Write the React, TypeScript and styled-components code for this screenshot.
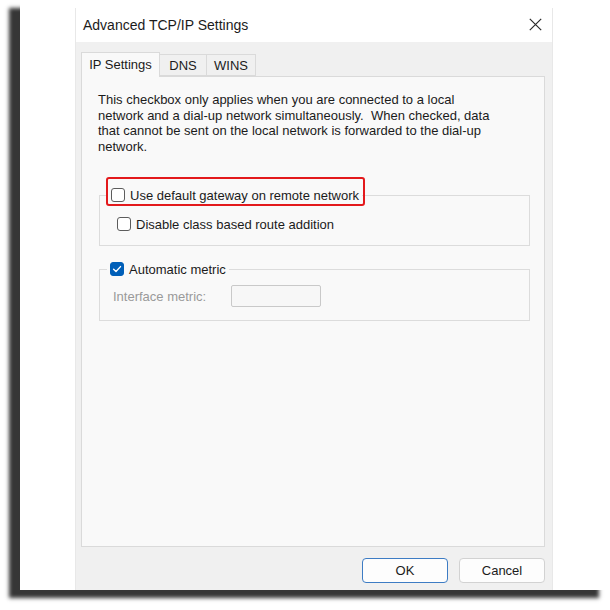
import * as React from 'react';
import styled, { createGlobalStyle } from 'styled-components';

const GlobalStyle = createGlobalStyle`
  html, body {
    margin: 0;
    padding: 0;
    background: #ffffff;
  }
  body {
    font-family: "Liberation Sans", Arial, sans-serif;
    color: #1b1b1b;
  }
  * {
    box-sizing: border-box;
  }
`;

interface ICheckProps {
  checked?: boolean;
}

const CheckBox: React.FC<ICheckProps> = ({ checked }) => (
  <Box $checked={checked}>
    {checked && (
      <svg width="10" height="10" viewBox="0 0 10 10">
        <path d="M1.6 5.2 L4 7.5 L8.5 2.6" fill="none" stroke="#ffffff" strokeWidth="1.4" strokeLinecap="round" strokeLinejoin="round" />
      </svg>
    )}
  </Box>
);

const App: React.FC = () => {
  return (
    <Page>
      <GlobalStyle />
      <Canvas>
        <Dialog>
          <TitleBar>
            <Title>Advanced TCP/IP Settings</Title>
            <CloseButton>
              <svg width="13" height="13" viewBox="0 0 13 13">
                <path d="M0.8 0.8 L12.2 12.2 M12.2 0.8 L0.8 12.2" stroke="#2b2b2b" strokeWidth="1.2" fill="none" />
              </svg>
            </CloseButton>
          </TitleBar>

          <DialogBody>
            <TabList>
              <Tab $active $w={79}>IP Settings</Tab>
              <Tab $w={48}>DNS</Tab>
              <Tab $w={50}>WINS</Tab>
            </TabList>

            <TabPanel>
              <Note>
                This checkbox only applies when you are connected to a local<br />
                network and a dial-up network simultaneously.&nbsp; When checked, data<br />
                that cannot be sent on the local network is forwarded to the dial-up<br />
                network.
              </Note>

              <GroupBox $top={33}>
                <Legend $left={8}>
                  <Highlight />
                  <CheckBox />
                  <Label>Use default gateway on remote network</Label>
                </Legend>
                <CheckRow>
                  <CheckBox />
                  <Label>Disable class based route addition</Label>
                </CheckRow>
              </GroupBox>

              <GroupBox $top={15}>
                <Legend $left={7}>
                  <CheckBox checked />
                  <Label>Automatic metric</Label>
                </Legend>
                <MetricRow>
                  <MutedLabel>Interface metric:</MutedLabel>
                  <MetricInput disabled />
                </MetricRow>
              </GroupBox>
            </TabPanel>
          </DialogBody>

          <Footer>
            <Button $primary>OK</Button>
            <Button>Cancel</Button>
          </Footer>
        </Dialog>
      </Canvas>
    </Page>
  );
};

export default App;

const Page = styled.div`
  width: 610px;
  height: 610px;
  overflow: hidden;
  padding-left: 20px;
  background: #ffffff;
`;

const Canvas = styled.div`
  width: 590px;
  height: 590px;
  padding: 8px 0 0 55px;
  background: #ffffff;
  box-shadow: -11px 8px 4px #363636;
`;

const Dialog = styled.div`
  width: 478px;
  height: 582px;
  display: flex;
  flex-direction: column;
  border-left: 1px solid #e8e8e8;
  border-right: 1px solid #e8e8e8;
`;

const TitleBar = styled.div`
  height: 34px;
  flex: none;
  display: flex;
  align-items: center;
  justify-content: space-between;
  padding: 0 10px 0 7px;
  background: #ffffff;
`;

const Title = styled.div`
  font-size: 14px;
  color: #1b1b1b;
  margin-top: -1px;
`;

const CloseButton = styled.div`
  width: 13px;
  height: 13px;
  display: flex;
  margin-top: -2px;
`;

const DialogBody = styled.div`
  flex: 1;
  display: flex;
  flex-direction: column;
  padding: 10px 7px 0 5px;
  background: #f0f0f0;
`;

const TabList = styled.div`
  display: flex;
  align-items: flex-end;
  height: 24px;
  flex: none;
`;

const Tab = styled.div<{ $active?: boolean; $w: number }>`
  width: ${p => p.$w}px;
  height: ${p => (p.$active ? 25 : 22)}px;
  margin-bottom: ${p => (p.$active ? -1 : 0)}px;
  margin-left: ${p => (p.$active ? 0 : -1)}px;
  position: relative;
  z-index: ${p => (p.$active ? 1 : 0)};
  display: flex;
  align-items: center;
  justify-content: center;
  padding-bottom: ${p => (p.$active ? 2 : 0)}px;
  font-size: 13px;
  color: #1b1b1b;
  background: ${p => (p.$active ? '#f9f9f9' : '#f0f0f0')};
  border: 1px solid #dadada;
  border-bottom: ${p => (p.$active ? 'none' : '1px solid #dadada')};
`;

const TabPanel = styled.div`
  flex: 1;
  padding: 15px 14px 0 16px;
  background: #f9f9f9;
  border: 1px solid #dadada;
`;

const Note = styled.p`
  margin: 0;
  font-size: 13px;
  line-height: 15.6px;
  color: #1b1b1b;
`;

const GroupBox = styled.fieldset<{ $top: number }>`
  margin: ${p => p.$top}px 0 0 1px;
  padding: 0 0 13px 0;
  border: 1px solid #dcdcdc;
  min-width: 0;
`;

const Legend = styled.legend<{ $left: number }>`
  position: relative;
  display: flex;
  align-items: center;
  height: 16px;
  margin-left: ${p => p.$left}px;
  padding: 0 3px;
`;

const Highlight = styled.div`
  position: absolute;
  top: -10px;
  left: -2px;
  right: -3px;
  bottom: -3px;
  border: 2px solid #e3191c;
  border-radius: 3px;
  pointer-events: none;
`;

const Box = styled.span<{ $checked?: boolean }>`
  width: 14px;
  height: 14px;
  flex: none;
  display: flex;
  align-items: center;
  justify-content: center;
  margin-right: 5px;
  border-radius: 3px;
  background: ${p => (p.$checked ? '#005fb8' : '#ffffff')};
  border: 1px solid ${p => (p.$checked ? '#005fb8' : '#5c5c5c')};
`;

const Label = styled.span`
  font-size: 13px;
  color: #1b1b1b;
  white-space: nowrap;
`;

const CheckRow = styled.div`
  display: flex;
  align-items: center;
  height: 16px;
  margin-top: 13px;
  padding-left: 17px;
`;

const MetricRow = styled.div`
  display: flex;
  align-items: center;
  margin-top: 8px;
  padding-left: 13px;
`;

const MutedLabel = styled.span`
  width: 118px;
  font-size: 13px;
  color: #9a9a9a;
`;

const MetricInput = styled.input`
  width: 90px;
  height: 22px;
  margin: 0;
  padding: 0;
  border: 1px solid #c9c9c9;
  border-radius: 2px;
  background: #f7f7f7;
`;

const Footer = styled.div`
  height: 43px;
  flex: none;
  display: flex;
  justify-content: flex-end;
  align-items: flex-start;
  gap: 11px;
  padding: 11px 7px 0 0;
  background: #f0f0f0;
`;

const Button = styled.button<{ $primary?: boolean }>`
  width: 86px;
  height: 25px;
  margin: 0;
  padding: 0;
  font-family: "Liberation Sans", Arial, sans-serif;
  font-size: 13px;
  color: #1b1b1b;
  background: #fdfdfd;
  border: 1px solid ${p => (p.$primary ? '#3d7cc4' : '#d2d2d2')};
  border-radius: 4px;
`;
